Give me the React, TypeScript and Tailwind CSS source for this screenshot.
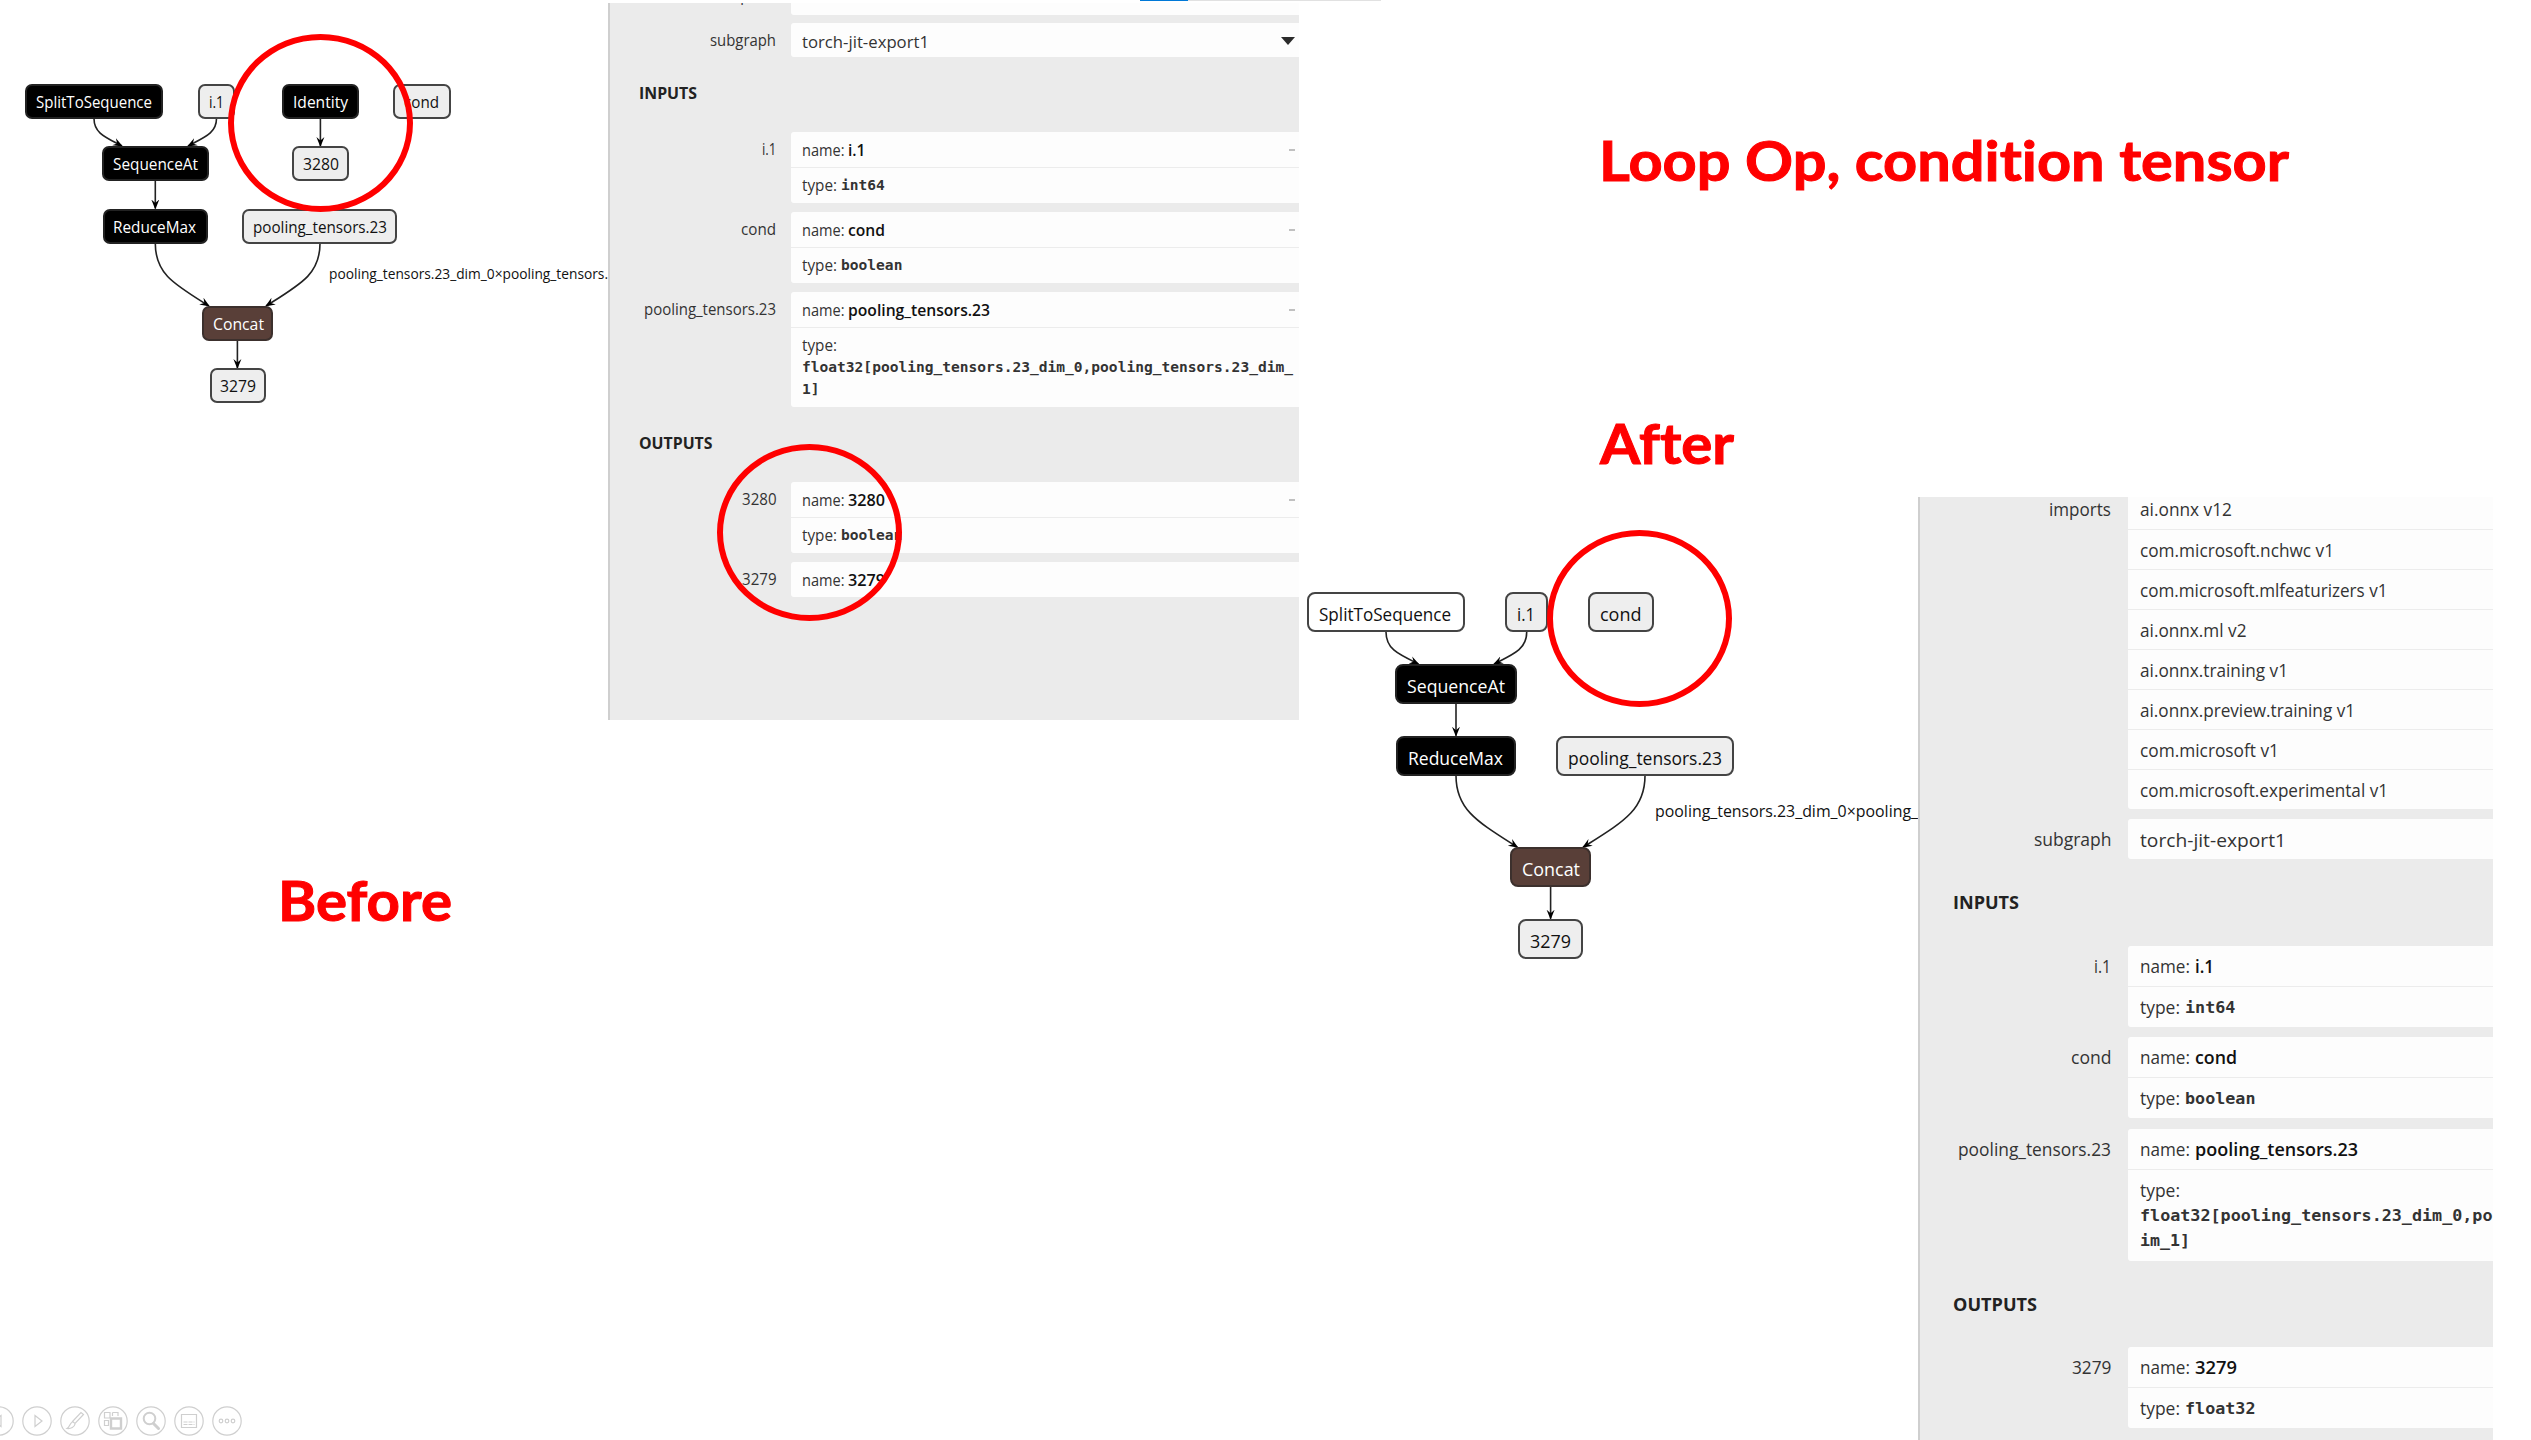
import { useLayoutEffect, useRef } from "react";
import type { ReactNode } from "react";

/* Single-line text whose glyphs are condensed or widened to an exact width. */
function Fit({ w, children, className = "" }: { w: number; children: ReactNode; className?: string }) {
  const ref = useRef<HTMLSpanElement>(null);
  useLayoutEffect(() => {
    const el = ref.current;
    if (!el) return;
    el.style.transform = "none";
    const natural = el.getBoundingClientRect().width;
    if (natural > 0) el.style.transform = `scaleX(${w / natural})`;
  }, [w]);
  return (
    <span className={`inline-flex shrink-0 whitespace-pre ${className}`} style={{ width: w }}>
      <span ref={ref} className="block shrink-0 origin-left">
        {children}
      </span>
    </span>
  );
}

type Size = "sm" | "lg";
type Kind = "op" | "concat" | "io" | "plain";

interface NodeSpec {
  t: string;
  x: number;
  y: number;
  w: number;
  tw: number;
  k: Kind;
}

const kindClass: Record<Kind, string> = {
  op: "bg-black text-white border-[#222]",
  concat: "bg-[#593f38] text-white border-[#3c302d]",
  io: "bg-[#eeeeee] text-[#111] border-[#444]",
  plain: "bg-white text-[#111] border-[#444]",
};

const nodeSize: Record<Size, string> = {
  sm: "h-[35px] rounded-[7px] pl-[8.5px] text-[16px] leading-[33px]",
  lg: "h-10 rounded-[8px] pl-[9.5px] text-[18px] leading-[40px]",
};

function GraphNode({ n, size }: { n: NodeSpec; size: Size }) {
  return (
    <div
      className={`absolute flex overflow-hidden border-2 ${nodeSize[size]} ${kindClass[n.k]}`}
      style={{ left: n.x, top: n.y, width: n.w }}
    >
      <Fit w={n.tw}>{n.t}</Fit>
    </div>
  );
}

function Edges({ id, paths, w, h }: { id: string; paths: string[]; w: number; h: number }) {
  return (
    <svg className="absolute left-0 top-0" width={w} height={h} fill="none">
      <defs>
        <marker id={id} viewBox="0 0 10 10" refX="9" refY="5" markerWidth="10" markerHeight="10" markerUnits="userSpaceOnUse" orient="auto">
          <path d="M0 1 L10 5 L0 9 L3.5 5 Z" fill="#000" />
        </marker>
      </defs>
      {paths.map((d) => (
        <path key={d} d={d} stroke="#222" strokeWidth="1.6" markerEnd={`url(#${id})`} />
      ))}
    </svg>
  );
}

const beforeNodes: NodeSpec[] = [
  { t: "SplitToSequence", x: 25, y: 83.5, w: 138, tw: 116, k: "op" },
  { t: "i.1", x: 198, y: 83.5, w: 37, tw: 15, k: "io" },
  { t: "Identity", x: 282, y: 83.5, w: 77, tw: 55, k: "op" },
  { t: "cond", x: 393, y: 83.5, w: 57.5, tw: 35, k: "io" },
  { t: "SequenceAt", x: 102, y: 146, w: 106.5, tw: 85, k: "op" },
  { t: "3280", x: 292, y: 146, w: 56.5, tw: 36, k: "io" },
  { t: "ReduceMax", x: 102.5, y: 208.5, w: 105, tw: 83, k: "op" },
  { t: "pooling_tensors.23", x: 242, y: 208.5, w: 155, tw: 134, k: "io" },
  { t: "Concat", x: 202, y: 306, w: 71, tw: 51, k: "concat" },
  { t: "3279", x: 209.5, y: 368, w: 56.5, tw: 36, k: "io" },
];

const beforeEdges = [
  "M94 118.5 C94 133 105 137 122 146",
  "M216.5 118.5 C216.5 133 205 137 188 146",
  "M155.3 181 V208.5",
  "M320.4 118.5 V146",
  "M155.3 243.5 C155.3 274 174 284 209 306",
  "M320 243.5 C320 274 301 284 266 306",
  "M237.4 341 V368",
];

/* Coordinates are relative to the lower graph's own canvas. */
const afterNodes: NodeSpec[] = [
  { t: "SplitToSequence", x: 8, y: 95.3, w: 158, tw: 132, k: "plain" },
  { t: "i.1", x: 206, y: 95.3, w: 43, tw: 18, k: "io" },
  { t: "cond", x: 289, y: 95.3, w: 65.5, tw: 41.5, k: "io" },
  { t: "SequenceAt", x: 96, y: 166.7, w: 122, tw: 98, k: "op" },
  { t: "ReduceMax", x: 97, y: 238.7, w: 120, tw: 95, k: "op" },
  { t: "pooling_tensors.23", x: 257, y: 238.7, w: 178, tw: 154, k: "io" },
  { t: "Concat", x: 211, y: 350.3, w: 81, tw: 58, k: "concat" },
  { t: "3279", x: 219, y: 421.7, w: 65, tw: 41, k: "io" },
];

const afterEdges = [
  "M87 135 C87 152 99 157 119.5 167",
  "M227.7 135 C227.7 152 215 157 195 167",
  "M157 206.5 V238.7",
  "M157 278.7 C157 313 179 325 218.5 350.3",
  "M346 278.7 C346 313 324 325 284 350.3",
  "M251.6 390 V421.7",
];

function Ring({ className }: { className: string }) {
  return <div className={`absolute z-10 rounded-[50%] border-[6px] border-[#ff0000] ${className}`} />;
}

const panel = {
  sm: {
    text: "text-[16px]",
    label: "w-[166px] leading-[34px]",
    value: "ml-[15px]",
    line: "h-[35px] pl-[10.5px]",
    name: "leading-[36px]",
    type: "leading-[35px]",
    mono: "text-[14.5px]",
  },
  lg: {
    text: "text-[17.5px]",
    label: "w-[191px] leading-[40px]",
    value: "ml-[17px]",
    line: "h-10 pl-[11.5px]",
    name: "leading-[41px]",
    type: "leading-[41px]",
    mono: "text-[16.5px]",
  },
};

function Row({ size, label, lw, children }: { size: Size; label: string; lw: number; children: ReactNode }) {
  const p = panel[size];
  return (
    <div className={`flex shrink-0 ${p.text}`}>
      <div className={`flex shrink-0 justify-end text-[#333] ${p.label}`}>
        <Fit w={lw}>{label}</Fit>
      </div>
      <div className={`relative min-w-0 flex-1 divide-y divide-[#ececec] overflow-hidden rounded-l-[3px] bg-[#fdfdfd] ${p.value}`}>
        {children}
      </div>
    </div>
  );
}

function Name({ size, v, vw, dash = false }: { size: Size; v: string; vw: number; dash?: boolean }) {
  const p = panel[size];
  const lg = size === "lg";
  return (
    <div className={`flex box-content ${p.line} ${p.name}`}>
      <Fit w={lg ? 50 : 42.5}>name:</Fit>
      <Fit w={vw} className={lg ? "ml-[5px] font-semibold text-[#111]" : "ml-1 font-semibold text-[#111]"}>
        {v}
      </Fit>
      {dash && <span className="ml-auto mr-[4px] mt-[17px] h-[2px] w-[6px] bg-[#c0c0c0]" />}
    </div>
  );
}

function Type({ size, v, vw }: { size: Size; v?: string; vw?: number }) {
  const p = panel[size];
  const lg = size === "lg";
  return (
    <div className={`flex box-content ${p.line} ${p.type}`}>
      <Fit w={lg ? 40 : 35}>type:</Fit>
      {v && vw && (
        <Fit
          w={vw}
          className={`font-['DejaVu_Sans_Mono',monospace] font-bold text-[#333] ${p.mono} ${lg ? "ml-[5px]" : "ml-1"}`}
        >
          {v}
        </Fit>
      )}
    </div>
  );
}

function Heading({ w, children, className }: { w: number; children: string; className: string }) {
  return (
    <div className={`shrink-0 font-bold text-[#222] ${className}`}>
      <Fit w={w}>{children}</Fit>
    </div>
  );
}

function BeforePanel() {
  return (
    <aside className="mt-[3px] flex h-[717px] w-[691px] flex-col overflow-hidden border-l-2 border-[#cfcfcf] bg-[#ebebeb]">
      <div className="-mt-[23px] flex h-[35px] shrink-0 text-[15px]">
        <div className="flex w-[166px] justify-end leading-[30px] text-[#333]">
          <Fit w={53}>imports</Fit>
        </div>
        <div className="ml-[15px] flex-1 rounded-l-[3px] bg-[#fdfdfd]" />
      </div>
      <div className="h-[8px] shrink-0" />
      <Row size="sm" label="subgraph" lw={66}>
        <div className="flex h-[34px] pl-[10.5px] text-[17px] leading-[37px] text-[#333]">
          <Fit w={127}>torch-jit-export1</Fit>
          <svg className="absolute right-[4px] top-[14px]" width="14" height="8">
            <path d="M0 0 H14 L7 8 Z" fill="#2b2b2b" />
          </svg>
        </div>
      </Row>
      <Heading w={58} className="h-[75px] pl-[29px] pt-[21px] text-[15.5px] leading-[30px]">
        INPUTS
      </Heading>
      <div className="flex flex-col gap-[9px]">
        <Row size="sm" label="i.1" lw={14.5}>
          <Name size="sm" v="i.1" vw={17.5} dash />
          <Type size="sm" v="int64" vw={43.8} />
        </Row>
        <Row size="sm" label="cond" lw={35}>
          <Name size="sm" v="cond" vw={37} dash />
          <Type size="sm" v="boolean" vw={61.4} />
        </Row>
        <Row size="sm" label="pooling_tensors.23" lw={132}>
          <Name size="sm" v="pooling_tensors.23" vw={142} dash />
          <div className="h-[79px]">
            <Type size="sm" />
            <div className="-mt-[7px] flex flex-col pl-[10.5px] font-['DejaVu_Sans_Mono',monospace] text-[14.5px] font-bold leading-[22px] text-[#333]">
              <Fit w={491}>float32[pooling_tensors.23_dim_0,pooling_tensors.23_dim_</Fit>
              <Fit w={17.5}>1]</Fit>
            </div>
          </div>
        </Row>
      </div>
      <Heading w={73.5} className="h-[75px] pl-[29px] pt-[21px] text-[15.5px] leading-[30px]">
        OUTPUTS
      </Heading>
      <div className="flex flex-col gap-[9px]">
        <Row size="sm" label="3280" lw={34.5}>
          <Name size="sm" v="3280" vw={37} dash />
          <Type size="sm" v="boolean" vw={61.4} />
        </Row>
        <Row size="sm" label="3279" lw={34.5}>
          <Name size="sm" v="3279" vw={37} />
        </Row>
      </div>
    </aside>
  );
}

const imports: [string, number][] = [
  ["ai.onnx v12", 92],
  ["com.microsoft.nchwc v1", 194],
  ["com.microsoft.mlfeaturizers v1", 247.5],
  ["ai.onnx.ml v2", 106.5],
  ["ai.onnx.training v1", 148],
  ["ai.onnx.preview.training v1", 215],
  ["com.microsoft v1", 139],
  ["com.microsoft.experimental v1", 248],
];

function AfterPanel() {
  return (
    <aside className="flex h-[943px] w-[575px] flex-col overflow-hidden border-l-2 border-[#cfcfcf] bg-[#ebebeb]">
      <div className="-mt-[8px] shrink-0">
        <Row size="lg" label="imports" lw={62}>
          {imports.map(([name, w], i) => (
            <div key={name} className={`box-content flex pl-[11.5px] leading-[41px] text-[#333] ${i ? "h-[39px]" : "h-10"}`}>
              <Fit w={w}>{name}</Fit>
            </div>
          ))}
        </Row>
      </div>
      <div className="h-[10px] shrink-0" />
      <Row size="lg" label="subgraph" lw={77.5}>
        <div className="flex h-[38.5px] pl-[11.5px] text-[18.5px] leading-[42px] text-[#333]">
          <Fit w={146}>torch-jit-export1</Fit>
        </div>
      </Row>
      <Heading w={66} className="h-[86.5px] pl-[33px] pt-[26px] text-[17.5px] leading-[34px]">
        INPUTS
      </Heading>
      <div className="flex shrink-0 flex-col gap-[10.5px]">
        <Row size="lg" label="i.1" lw={17}>
          <Name size="lg" v="i.1" vw={19} />
          <Type size="lg" v="int64" vw={50.4} />
        </Row>
        <Row size="lg" label="cond" lw={40.5}>
          <Name size="lg" v="cond" vw={42} />
          <Type size="lg" v="boolean" vw={70.5} />
        </Row>
        <Row size="lg" label="pooling_tensors.23" lw={153}>
          <Name size="lg" v="pooling_tensors.23" vw={163} />
          <div className="h-[91px]">
            <Type size="lg" />
            <div className="-mt-[7px] flex flex-col pl-[11.5px] font-['DejaVu_Sans_Mono',monospace] text-[16.5px] font-bold leading-[25px] text-[#333]">
              <Fit w={352.5}>float32[pooling_tensors.23_dim_0,po</Fit>
              <Fit w={50}>im_1]</Fit>
            </div>
          </div>
        </Row>
      </div>
      <Heading w={84} className="h-[86.5px] pl-[33px] pt-[26px] text-[17.5px] leading-[34px]">
        OUTPUTS
      </Heading>
      <Row size="lg" label="3279" lw={39.5}>
        <Name size="lg" v="3279" vw={42} />
        <Type size="lg" v="float32" vw={70.5} />
      </Row>
    </aside>
  );
}

function SlideControls() {
  const glyphs: ReactNode[] = [
    <path key="p" d="M17 9.5 V20.5 L10 15 Z" />,
    <path key="n" d="M13 9.5 V20.5 L20 15 Z" />,
    <g key="e">
      <path d="M12.5 15.5 L21 6.5 L23.5 8.5 L15 17.5 Z" />
      <path d="M12.5 16 C9.5 17.5 10 20.5 7 22.5 C11 23 14.5 21 15 18" />
    </g>,
    <g key="s">
      <path d="M6.5 6.5 H12 V12 H6.5 Z M14.5 6.5 H20 V10 M14.5 10 V6.5 M6.5 14.5 H10.5 V19.5 H6.5 Z M12 12 V10" />
      <path d="M13 12.5 H23 V22.5 H13 Z" strokeWidth="2.4" />
    </g>,
    <g key="z">
      <circle cx="13.5" cy="12.5" r="5.8" strokeWidth="2" />
      <path d="M17.5 17.5 L22.5 22.5" strokeWidth="3" strokeLinecap="round" />
    </g>,
    <g key="c">
      <path d="M7.5 8.5 H22.5 V21.5 H7.5 Z" />
      <path d="M9.5 16 H20.5 M9.5 18.5 H20.5" strokeDasharray="4 1" />
    </g>,
    <g key="m">
      <circle cx="9" cy="15" r="1.8" />
      <circle cx="15" cy="15" r="1.8" />
      <circle cx="21" cy="15" r="1.8" />
    </g>,
  ];
  return (
    <div className="absolute -left-4 top-[1406px] flex gap-2">
      {glyphs.map((g, i) => (
        <svg key={i} width="30" height="30" viewBox="0 0 30 30" fill="none" stroke="#cfcfcf" strokeWidth="1.2">
          <circle cx="15" cy="15" r="14.2" />
          {g}
        </svg>
      ))}
    </div>
  );
}

export default function App() {
  const title =
    "flex shrink-0 font-['Lato',sans-serif] text-[56px] font-bold leading-[66px] text-[#ff0000] [font-variant-ligatures:none] [-webkit-text-stroke:1px_#ff0000]";
  return (
    <main className="relative flex h-[1440px] w-[2531px] overflow-hidden bg-white font-['Open_Sans','Noto_Sans',sans-serif] text-[#333]">
      <section className="w-[1299px] shrink-0">
        <div className="flex h-[720px]">
          <div className="relative w-[608px] shrink-0 overflow-hidden">
            <Edges id="arrow-before" paths={beforeEdges} w={608} h={720} />
            {beforeNodes.map((n) => (
              <GraphNode key={n.t} n={n} size="sm" />
            ))}
            <div className="absolute left-[329px] top-[263px] text-[14.5px] leading-[22px] text-[#111]">
              <Fit w={279}>pooling_tensors.23_dim_0×pooling_tensors.</Fit>
            </div>
            <Ring className="left-[228px] top-[34px] h-[178px] w-[185px]" />
          </div>
          <BeforePanel />
        </div>
        <h2 className={`mt-[147px] pl-[278px] ${title}`}>
          <Fit w={174}>Before</Fit>
        </h2>
      </section>

      <section className="flex-1">
        <h1 className={`mt-[127px] pl-[300px] ${title}`}>
          <Fit w={690}>Loop Op, condition tensor</Fit>
        </h1>
        <h2 className={`mt-[217px] pl-[301px] ${title}`}>
          <Fit w={134}>After</Fit>
        </h2>
        <div className="mt-[21px] flex h-[943px]">
          <div className="relative w-[619px] shrink-0 overflow-hidden">
            <Edges id="arrow-after" paths={afterEdges} w={619} h={943} />
            {afterNodes.map((n) => (
              <GraphNode key={n.t} n={n} size="lg" />
            ))}
            <div className="absolute left-[356px] top-[302px] text-[16px] leading-[24px] text-[#111]">
              <Fit w={263}>pooling_tensors.23_dim_0×pooling_</Fit>
            </div>
            <Ring className="left-[248px] top-[33px] h-[177px] w-[185px]" />
          </div>
          <AfterPanel />
        </div>
      </section>

      <Ring className="left-[717px] top-[444px] h-[177px] w-[185px]" />
      <div className="absolute left-[1140px] top-0 flex h-px w-[241px] bg-[#e1e1e1]">
        <div className="w-12 bg-[#0078d7]" />
      </div>
      <SlideControls />
    </main>
  );
}
